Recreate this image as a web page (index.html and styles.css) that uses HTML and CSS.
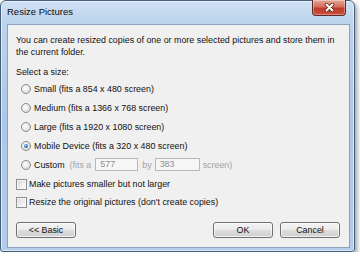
FILE: index.html
```html
<!DOCTYPE html>
<html lang="en">
<head>
  <meta charset="UTF-8" />
  <meta name="viewport" content="width=device-width, initial-scale=1.0"/>
  <title>Resize Pictures</title>
  <link rel="stylesheet" href="styles.css">
</head>
<body>
  <div class="window">
    <div class="titlebar">
      <span class="title">Resize Pictures</span>
      <button class="close" aria-label="Close">
        <svg width="11" height="9" viewBox="0 0 11 9">
          <path d="M2.5 1.5 L8.5 7.5 M8.5 1.5 L2.5 7.5" stroke="#5a1f18" stroke-width="3.4" stroke-linecap="round"/>
          <path d="M2.5 1.5 L8.5 7.5 M8.5 1.5 L2.5 7.5" stroke="#fff" stroke-width="2" stroke-linecap="round"/>
        </svg>
      </button>
    </div>

    <div class="client">
      <p class="intro">You can create resized copies of one or more selected pictures and store them in<br>the current folder.</p>

      <div class="label">Select a size:</div>

      <div class="sizes">
        <label class="option"><span class="radio"></span>Small (fits a 854 x 480 screen)</label>
        <label class="option"><span class="radio"></span>Medium (fits a 1366 x 768 screen)</label>
        <label class="option"><span class="radio"></span>Large (fits a 1920 x 1080 screen)</label>
        <label class="option"><span class="radio checked"></span>Mobile Device (fits a 320 x 480 screen)</label>
        <label class="option custom">
          <span class="radio"></span>Custom
          <span class="dim fits">(fits a</span>
          <span class="box">577</span>
          <span class="dim by">by</span>
          <span class="box">383</span>
          <span class="dim screen">screen)</span>
        </label>
      </div>

      <label class="check-row"><span class="check"></span>Make pictures smaller but not larger</label>
      <label class="check-row"><span class="check"></span>Resize the original pictures (don't create copies)</label>

      <div class="buttons">
        <button class="btn">&lt;&lt; Basic</button>
        <div class="right">
          <button class="btn">OK</button>
          <button class="btn">Cancel</button>
        </div>
      </div>
    </div>
  </div>
</body>
</html>
```

FILE: styles.css
```css
body {
  margin: 0;
  background: #ffffff;
  font-family: "Liberation Sans", Arial, sans-serif;
  font-size: 8.9px;
  color: #111;
}

.window {
  width: 355px;
  height: 252px;
  box-sizing: border-box;
  border: 1px solid #465f7c;
  border-radius: 6px 6px 3px 3px;
  background: linear-gradient(#d0e1f4, #bcd3ec 22px, #adc8e6 120px, #b4cdea);
  box-shadow: 2px 3px 5px rgba(0, 0, 0, 0.4), inset 0 0 0 1px rgba(255, 255, 255, 0.55);
  padding: 0 4px 3px 6px;
  display: flex;
  flex-direction: column;
}

.titlebar {
  height: 23px;
  display: flex;
  justify-content: space-between;
  align-items: flex-start;
  flex-shrink: 0;
}

.title {
  font-size: 9.5px;
  line-height: 14px;
  padding-top: 4px;
  color: #0a0a0a;
}

.close {
  width: 34px;
  height: 16px;
  margin-top: -1px;
  margin-right: 4px;
  padding: 0;
  border: 1px solid #5e2a24;
  border-top: none;
  border-radius: 0 0 4px 4px;
  background: linear-gradient(#e6a795, #d46f5d 45%, #bf3b2c 55%, #c9503c);
  box-shadow: inset 0 0 0 1px rgba(255, 255, 255, 0.35);
  display: flex;
  justify-content: center;
  align-items: center;
}

.close svg {
  display: block;
}

.client {
  flex: 1;
  background: #f0f0f0;
  border: 1px solid #8ba2bd;
  padding: 9px 9px 9px 8px;
}

.intro {
  margin: 0;
  line-height: 12px;
}

.label {
  margin-top: 8px;
  line-height: 12px;
}

.sizes {
  margin-top: 1px;
}

.option {
  display: flex;
  align-items: center;
  height: 19px;
  padding-left: 5px;
}

.radio {
  width: 10px;
  height: 10px;
  box-sizing: border-box;
  border: 1px solid #8a8c8e;
  border-radius: 50%;
  background: radial-gradient(circle at 40% 40%, #ffffff, #e2e2e2 60%, #cfcfcf);
  margin-right: 3px;
  display: flex;
  justify-content: center;
  align-items: center;
}

.radio.checked::after {
  content: "";
  width: 4px;
  height: 4px;
  border-radius: 50%;
  background: radial-gradient(circle at 40% 35%, #8cc6f0, #2a64a8 70%, #1d4c85);
}

.dim {
  color: #a4a4a4;
}

.fits {
  margin-left: 5px;
}

.box {
  width: 43px;
  height: 13px;
  box-sizing: border-box;
  border: 1px solid #b9b9b9;
  background: #f6f6f6;
  color: #8e8e8e;
  line-height: 11px;
  padding-left: 4px;
  margin-left: 4px;
}

.by {
  margin: 0 3px 0 4px;
}

.by + .box {
  margin-left: 0;
  width: 45px;
}

.screen {
  margin-left: 3px;
}

.check-row {
  display: flex;
  align-items: center;
  height: 18px;
}

.check-row:first-of-type {
  margin-top: 1px;
}

.check {
  width: 11px;
  height: 11px;
  box-sizing: border-box;
  border: 1px solid #8e8f8f;
  background: linear-gradient(135deg, #d6d6d6, #f4f4f4 70%, #fdfdfd);
  box-shadow: inset 0 0 0 1px #f6f6f6;
  margin-right: 2px;
}

.buttons {
  display: flex;
  justify-content: space-between;
  margin-top: 11px;
}

.right {
  display: flex;
  gap: 7px;
}

.btn {
  width: 60px;
  height: 16px;
  padding: 0;
  border: 1px solid #707070;
  border-radius: 3px;
  background: linear-gradient(#f3f3f3, #ebebeb 50%, #dddddd 50%, #cfcfcf);
  box-shadow: inset 0 0 0 1px rgba(255, 255, 255, 0.7);
  font-family: inherit;
  font-size: 8.9px;
  color: #111;
}
```
